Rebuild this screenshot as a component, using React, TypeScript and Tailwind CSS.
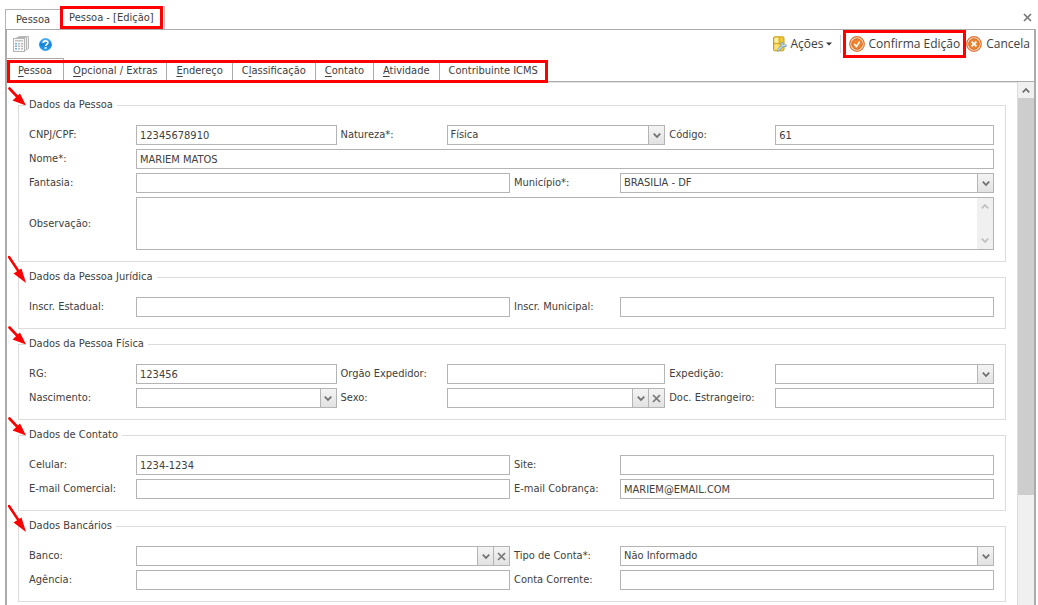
import { useState } from "react";
import type { ReactNode } from "react";

const formTabs = [
  { before: "", key: "P", after: "essoa" },
  { before: "", key: "O", after: "pcional / Extras" },
  { before: "", key: "E", after: "ndereço" },
  { before: "C", key: "l", after: "assificação" },
  { before: "", key: "C", after: "ontato" },
  { before: "", key: "A", after: "tividade" },
  { before: "Contribuinte ICMS", key: "", after: "" },
];

const boxClass = "flex h-5 min-w-0 border border-[#b4b4b4] bg-white";
const fieldClass =
  "h-full w-full min-w-0 appearance-none bg-transparent px-[3px] text-[#404040] outline-none";
const smallButton =
  "flex h-full w-4 shrink-0 items-center justify-center border-l border-[#b4b4b4] bg-linear-to-b from-[#f4f4f4] to-[#e2e2e2]";

function Chevron({ color = "#707070", up = false }: { color?: string; up?: boolean }) {
  return (
    <svg width="8" height="7" viewBox="0 0 8 7" fill="none" stroke={color} strokeWidth="1.8">
      <path d={up ? "M0.8 5.4L4 2L7.2 5.4" : "M0.8 1.6L4 5L7.2 1.6"} />
    </svg>
  );
}

function Cross() {
  return (
    <svg width="9" height="9" viewBox="0 0 9 9" fill="none" stroke="#777" strokeWidth="1.7">
      <path d="M1 1L8 8M8 1L1 8" />
    </svg>
  );
}

function Label({ id, text, first }: { id: string; text: string; first?: boolean }) {
  return (
    <label htmlFor={id} className={first ? "whitespace-nowrap" : "pl-1 whitespace-nowrap"}>
      {text}
    </label>
  );
}

function TextField({ id, value = "" }: { id: string; value?: string }) {
  return (
    <div className={boxClass}>
      <input id={id} type="text" defaultValue={value} className={fieldClass} />
    </div>
  );
}

function DateField({ id }: { id: string }) {
  return (
    <div className={boxClass}>
      <input id={id} type="text" className={fieldClass} />
      <button type="button" aria-label="Abrir calendário" className={smallButton}>
        <Chevron />
      </button>
    </div>
  );
}

function SelectField({
  id,
  options,
  clearable,
}: {
  id: string;
  options: string[];
  clearable?: boolean;
}) {
  const [value, setValue] = useState(options[0]);

  return (
    <div className={boxClass}>
      <div className="relative h-full min-w-0 flex-1">
        <select
          id={id}
          value={value}
          onChange={(e) => setValue(e.target.value)}
          className={fieldClass}
        >
          {options.map((o) => (
            <option key={o} value={o}>
              {o}
            </option>
          ))}
        </select>
        <span className="pointer-events-none absolute inset-y-0 right-0">
          <span className={smallButton}>
            <Chevron />
          </span>
        </span>
      </div>
      {clearable && (
        <button
          type="button"
          aria-label="Limpar"
          onClick={() => setValue("")}
          className={smallButton}
        >
          <Cross />
        </button>
      )}
    </div>
  );
}

function Arrow({ steep }: { steep?: boolean }) {
  if (steep) {
    return (
      <svg
        className="pointer-events-none absolute -top-3.5 -left-2.5"
        width="18"
        height="28"
        viewBox="0 0 18 28"
      >
        <path d="M1 2L11 17" stroke="#f00" strokeWidth="2.6" strokeLinecap="round" />
        <path d="M18 28L5.5 18.5L13.5 13.5Z" fill="#f00" />
      </svg>
    );
  }
  return (
    <svg
      className="pointer-events-none absolute -top-2.5 -left-2.5"
      width="18"
      height="19"
      viewBox="0 0 18 19"
    >
      <path d="M1.5 1.5L10 10.5" stroke="#f00" strokeWidth="2.6" strokeLinecap="round" />
      <path d="M18 18.5L4.5 13.5L12 6.5Z" fill="#f00" />
    </svg>
  );
}

function Group({
  title,
  steep,
  children,
}: {
  title: string;
  steep?: boolean;
  children: ReactNode;
}) {
  return (
    <div className="relative">
      <fieldset className="min-w-0 border border-[#dcdcdc] px-1.5 pb-[11px]">
        <legend className="px-1 leading-4">{title}</legend>
        <div className="flex flex-col gap-1 pt-3 pr-[5px] pl-1">{children}</div>
      </fieldset>
      <Arrow steep={steep} />
    </div>
  );
}

const row1 = "grid grid-cols-[107px_1fr] items-center";
const row2 = "grid grid-cols-[107px_1fr_110px_1fr] items-center";
const row3 = "grid grid-cols-[107px_11fr_110px_12fr_110px_12fr] items-center";

function GridIcon() {
  return (
    <svg width="16" height="16" viewBox="0 0 16 16">
      <path d="M5.5 0.5H15.5V12.5L13.5 14" fill="#f2f2f2" stroke="#b5b5b5" />
      <path d="M3.5 1.5H13.5V13.5L11.5 15" fill="#f2f2f2" stroke="#b5b5b5" />
      <rect x="0.5" y="2.5" width="11" height="13" fill="#f7f7f7" stroke="#b5b5b5" />
      <rect x="2" y="4" width="8" height="1.5" fill="#c4c4c4" />
      <g fill="#79b5de">
        <rect x="2" y="7" width="2" height="1.5" />
        <rect x="2" y="9.5" width="2" height="1.5" />
        <rect x="2" y="12" width="2" height="1.5" />
      </g>
      <g fill="#bcbcbc">
        <rect x="5" y="7" width="2" height="1.5" />
        <rect x="8" y="7" width="2" height="1.5" />
        <rect x="5" y="9.5" width="2" height="1.5" />
        <rect x="8" y="9.5" width="2" height="1.5" />
        <rect x="5" y="12" width="2" height="1.5" />
        <rect x="8" y="12" width="2" height="1.5" />
      </g>
    </svg>
  );
}

function HelpIcon() {
  return (
    <svg width="13" height="13" viewBox="0 0 13 13">
      <defs>
        <linearGradient id="help" x1="0" y1="0" x2="0" y2="1">
          <stop offset="0" stopColor="#55b4f2" />
          <stop offset="0.5" stopColor="#1583d8" />
          <stop offset="1" stopColor="#35a5ee" />
        </linearGradient>
      </defs>
      <circle cx="6.5" cy="6.5" r="6.4" fill="url(#help)" />
      <path
        d="M4.2 5C4.2 2.2 8.9 2.2 8.9 4.8C8.9 6.4 6.6 6.3 6.6 8.1"
        fill="none"
        stroke="#fff"
        strokeWidth="1.7"
      />
      <rect x="5.7" y="9" width="1.8" height="1.8" fill="#fff" />
    </svg>
  );
}

function ActionsIcon() {
  return (
    <svg width="14" height="16" viewBox="0 0 14 16">
      <rect x="0.5" y="0.8" width="10.5" height="14" rx="1.2" fill="#f3c832" stroke="#c99b1c" />
      <path d="M1.5 1.8H5.6V6.8H1.5Z" fill="#fdf0a6" />
      <path d="M1.5 8.2H5.6V13.8H1.5Z" fill="#fbe27a" />
      <path d="M1 7.5H11M6.2 1.3V7.5" stroke="#d5a626" />
      <path
        d="M5 14.5L9.8 9.4M8.8 7C8.2 9.2 9.8 10.8 12.6 9.6"
        fill="none"
        stroke="#6b9dc4"
        strokeWidth="2.4"
        strokeLinecap="round"
      />
      <path
        d="M5.2 14.2L9.8 9.4M9 7.2C8.6 9 9.8 10.2 12.2 9.4"
        fill="none"
        stroke="#c8e1f2"
        strokeWidth="1.2"
        strokeLinecap="round"
      />
    </svg>
  );
}

function OrangeIcon({ path }: { path: string }) {
  return (
    <svg width="16" height="16" viewBox="0 0 16 16" fill="none">
      <circle cx="8" cy="8" r="7.3" fill="#fbe3d0" stroke="#e0702c" strokeWidth="1.2" />
      <circle cx="8" cy="8" r="5.3" fill="#ee8430" stroke="#dc6a1e" />
      <path d={path} stroke="#fff" strokeWidth="1.6" />
    </svg>
  );
}

export default function App() {
  const [tab, setTab] = useState(0);

  return (
    <div className="flex h-screen flex-col overflow-hidden bg-white pr-0.5 pl-[5px] font-['DejaVu_Sans_Condensed','DejaVu_Sans',sans-serif] text-[11px] leading-4 text-[#404040]">
      <div className="flex h-[29px] shrink-0 items-end">
        <button type="button" className="h-5 border-t border-l border-[#b4b4b4] px-2.5">
          Pessoa
        </button>
        <button type="button" className="h-[23px] border-[3px] border-[#f00] px-1.5">
          Pessoa - [Edição]
        </button>
        <div className="h-[23px] w-0.5 border-r border-[#c4c4c4]" />
        <button type="button" aria-label="Fechar" className="mr-1 mb-[7px] ml-auto">
          <Cross />
        </button>
      </div>

      <main className="flex min-h-0 flex-1 flex-col border-x-2 border-t border-[#ababab]">
        <div className="flex h-7 shrink-0 items-center pl-1.5 font-['Open_Sans',sans-serif] text-xs">
          <button type="button" aria-label="Grade" className="mr-2.5">
            <GridIcon />
          </button>
          <button type="button" aria-label="Ajuda">
            <HelpIcon />
          </button>
          <div className="ml-auto flex items-center">
            <button type="button" className="flex items-center gap-1">
              <ActionsIcon />
              Ações
              <svg width="6" height="4" viewBox="0 0 6 4" className="-ml-0.5">
                <path d="M0 0.5H6L3 3.5Z" fill="#333" />
              </svg>
            </button>
            <div className="ml-2 h-[18px] w-px bg-[#d5d5d5]" />
            <button
              type="button"
              className="ml-0.5 flex h-7 items-center gap-1 border-[3px] border-[#f00] px-[3px]"
            >
              <OrangeIcon path="M5.2 8L7.4 10.4L10.8 5.6" />
              Confirma Edição
            </button>
            <button type="button" className="flex items-center gap-1 pr-1">
              <OrangeIcon path="M5.6 5.6L10.4 10.4M10.4 5.6L5.6 10.4" />
              Cancela
            </button>
          </div>
        </div>

        <nav className="flex h-6 shrink-0 items-end border-b border-[#ababab]">
          <div className="relative flex h-full items-end">
            {formTabs.map((t, i) => (
              <button
                key={i}
                type="button"
                onClick={() => setTab(i)}
                className={
                  i === tab
                    ? "h-full border-t border-r border-[#ababab] px-[11px] pt-0.5"
                    : "h-[21px] border-t border-r border-[#ababab] px-[9px]"
                }
              >
                {t.before}
                <span className="underline underline-offset-2">{t.key}</span>
                {t.after}
              </button>
            ))}
            <div className="pointer-events-none absolute inset-x-0 top-0.5 -bottom-0.5 border-[3px] border-[#f00]" />
          </div>
        </nav>

        <div className="flex min-h-0 flex-1">
          <form className="min-w-0 flex-1 overflow-hidden border-t border-[#e2e2e2] pt-3.5 pr-[11px] pl-[11px]">
            <div className="flex flex-col gap-[7px]">
              <Group title="Dados da Pessoa">
                <div className={row3}>
                  <Label first id="cpf" text="CNPJ/CPF:" />
                  <TextField id="cpf" value="12345678910" />
                  <Label id="natureza" text="Natureza*:" />
                  <SelectField id="natureza" options={["Física", "Jurídica"]} />
                  <Label id="codigo" text="Código:" />
                  <TextField id="codigo" value="61" />
                </div>
                <div className={row1}>
                  <Label first id="nome" text="Nome*:" />
                  <TextField id="nome" value="MARIEM MATOS" />
                </div>
                <div className={row2}>
                  <Label first id="fantasia" text="Fantasia:" />
                  <TextField id="fantasia" />
                  <Label id="municipio" text="Município*:" />
                  <SelectField id="municipio" options={["BRASILIA - DF"]} />
                </div>
                <div className={row1}>
                  <Label first id="observacao" text="Observação:" />
                  <div className="flex h-[53px] border border-[#b4b4b4]">
                    <textarea
                      id="observacao"
                      className="min-w-0 flex-1 resize-none px-[3px] outline-none"
                    />
                    <div className="flex w-4 flex-col items-center justify-between bg-[#f0f0f0] py-[5px]">
                      <Chevron up color="#c0c0c0" />
                      <Chevron color="#c0c0c0" />
                    </div>
                  </div>
                </div>
              </Group>

              <Group title="Dados da Pessoa Jurídica" steep>
                <div className={row2}>
                  <Label first id="estadual" text="Inscr. Estadual:" />
                  <TextField id="estadual" />
                  <Label id="municipal" text="Inscr. Municipal:" />
                  <TextField id="municipal" />
                </div>
              </Group>

              <Group title="Dados da Pessoa Física">
                <div className={row3}>
                  <Label first id="rg" text="RG:" />
                  <TextField id="rg" value="123456" />
                  <Label id="orgao" text="Orgão Expedidor:" />
                  <TextField id="orgao" />
                  <Label id="expedicao" text="Expedição:" />
                  <DateField id="expedicao" />
                </div>
                <div className={row3}>
                  <Label first id="nascimento" text="Nascimento:" />
                  <DateField id="nascimento" />
                  <Label id="sexo" text="Sexo:" />
                  <SelectField id="sexo" options={["", "Feminino", "Masculino"]} clearable />
                  <Label id="estrangeiro" text="Doc. Estrangeiro:" />
                  <TextField id="estrangeiro" />
                </div>
              </Group>

              <Group title="Dados de Contato">
                <div className={row2}>
                  <Label first id="celular" text="Celular:" />
                  <TextField id="celular" value="1234-1234" />
                  <Label id="site" text="Site:" />
                  <TextField id="site" />
                </div>
                <div className={row2}>
                  <Label first id="comercial" text="E-mail Comercial:" />
                  <TextField id="comercial" />
                  <Label id="cobranca" text="E-mail Cobrança:" />
                  <TextField id="cobranca" value="MARIEM@EMAIL.COM" />
                </div>
              </Group>

              <Group title="Dados Bancários" steep>
                <div className={row2}>
                  <Label first id="banco" text="Banco:" />
                  <SelectField id="banco" options={[""]} clearable />
                  <Label id="tipo" text="Tipo de Conta*:" />
                  <SelectField id="tipo" options={["Não Informado"]} />
                </div>
                <div className={row2}>
                  <Label first id="agencia" text="Agência:" />
                  <TextField id="agencia" />
                  <Label id="conta" text="Conta Corrente:" />
                  <TextField id="conta" />
                </div>
              </Group>
            </div>
          </form>

          <div className="flex w-[17px] shrink-0 flex-col border-l border-[#dcdcdc] bg-[#f0f0f0]">
            <div className="flex h-4 shrink-0 items-center justify-center">
              <Chevron up />
            </div>
            <div className="h-[76%] bg-[#cdcdcd]" />
          </div>
        </div>
      </main>
    </div>
  );
}
